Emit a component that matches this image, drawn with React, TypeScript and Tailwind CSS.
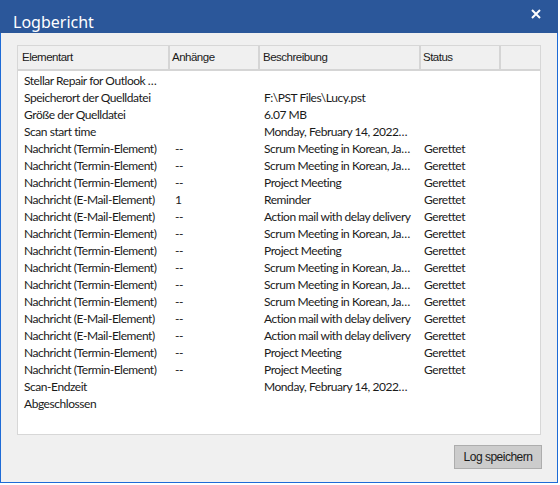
import React from "react";

type Row = [string, string, string, string];

const T = "Nachricht (Termin-Element)";
const E = "Nachricht (E-Mail-Element)";
const SCRUM = "Scrum Meeting in Korean, Ja…";
const PM = "Project Meeting";
const AM = "Action mail with delay delivery";
const G = "Gerettet";

const rows: Row[] = [
  ["Stellar Repair for Outlook …", "", "", ""],
  ["Speicherort der Quelldatei", "", "F:\\PST Files\\Lucy.pst", ""],
  ["Größe der Quelldatei", "", "6.07 MB", ""],
  ["Scan start time", "", "Monday, February 14, 2022…", ""],
  [T, "--", SCRUM, G],
  [T, "--", SCRUM, G],
  [T, "--", PM, G],
  [E, "1", "Reminder", G],
  [E, "--", AM, G],
  [T, "--", SCRUM, G],
  [T, "--", PM, G],
  [T, "--", SCRUM, G],
  [T, "--", SCRUM, G],
  [T, "--", SCRUM, G],
  [E, "--", AM, G],
  [E, "--", AM, G],
  [T, "--", PM, G],
  [T, "--", PM, G],
  ["Scan-Endzeit", "", "Monday, February 14, 2022…", ""],
  ["Abgeschlossen", "", "", ""],
];

const cols = "grid grid-cols-[152px_90px_161px_80px_1fr]";

export default function App() {
  return (
    <div className="w-[560px] h-[485px] bg-white">
      <div className="w-[558px] h-[483px] flex flex-col bg-[#f0f0f0] border border-t-0 border-[#1e6bd6]">
        <div className="h-[33px] bg-[#2b579a] flex justify-between items-start shrink-0 -mx-px px-[13px]">
          <div
            className="text-white text-[16px] leading-none pt-[14px]"
            style={{ fontFamily: '"Noto Sans", sans-serif' }}
          >
            Logbericht
          </div>
          <svg width="10" height="10" viewBox="0 0 10 10" className="mt-[9px] mr-[4px]">
            <path d="M1 1 L9 9 M9 1 L1 9" stroke="white" strokeWidth="2" />
          </svg>
        </div>

        <div className="ml-[16px] mt-[12px] w-[524px] h-[390px] border border-[#d7d7d7] bg-white flex flex-col shrink-0">
          <div
            className={`${cols} h-[25px] bg-[#f0f0f0] border-b-2 border-[#d5d5d5] text-[11.5px] tracking-[-0.5px] text-[#1a1a1a]`}
            style={{ fontFamily: '"Liberation Sans", Arial, sans-serif' }}
          >
            <div className="border-r-2 border-[#d5d5d5] pl-[4px] flex items-center">Elementart</div>
            <div className="border-r-2 border-[#d5d5d5] pl-[2px] flex items-center">Anhänge</div>
            <div className="border-r-2 border-[#d5d5d5] pl-[3px] flex items-center">Beschreibung</div>
            <div className="border-r-2 border-[#d5d5d5] pl-[2px] flex items-center">Status</div>
            <div />
          </div>
          <div
            className="pt-[1px] text-[12px] tracking-[-0.45px] text-[#1a1a1a]"
            style={{ fontFamily: 'Lato, sans-serif' }}
          >
            {rows.map((r, i) => (
              <div key={i} className={`${cols} h-[17px] items-center leading-none whitespace-nowrap`}>
                <div className="pl-[6px]">{r[0]}</div>
                <div className="pl-[5px]">{r[1]}</div>
                <div className="pl-[4px]">{r[2]}</div>
                <div className="pl-[3px]">{r[3]}</div>
                <div />
              </div>
            ))}
          </div>
        </div>

        <div className="flex justify-end mt-[10px] mr-[15px]">
          <button
            className="w-[88px] h-[24px] bg-[#cccccc] border border-[#adadad] text-[12px] tracking-[-0.5px] text-[#1a1a1a] flex items-center justify-center"
            style={{ fontFamily: '"Liberation Sans", Arial, sans-serif' }}
          >
            Log speichern
          </button>
        </div>
      </div>
    </div>
  );
}
